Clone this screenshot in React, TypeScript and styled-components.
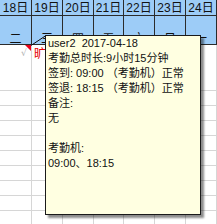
import React from "react";
import styled, { createGlobalStyle } from "styled-components";

const Global = createGlobalStyle`
  html, body { margin: 0; padding: 0; background: #fff; overflow: hidden; }
  body { font-family: "Liberation Sans", "Noto Sans CJK SC", sans-serif; }
`;

const Sheet = styled.div`
  position: relative;
  width: 217px;
  height: 224px;
  overflow: hidden;
  background: #fff;
`;

const Row = styled.div<{ $h: number; $header?: boolean }>`
  display: grid;
  grid-template-columns: 32px 31px 31px 30px 31px 31px 31px;
  height: ${(p) => p.$h}px;
  box-sizing: border-box;
  background: ${(p) => (p.$header ? "#9dccf7" : "#fff")};
  border-bottom: 1px solid ${(p) => (p.$header ? "#2b2b2b" : "#d6d6d6")};
`;

const Cell = styled.div<{ $header?: boolean; $valign?: "center" | "end" }>`
  position: relative;
  box-sizing: border-box;
  border-right: 1px solid ${(p) => (p.$header ? "#2b2b2b" : "#d6d6d6")};
  display: flex;
  justify-content: center;
  align-items: ${(p) => (p.$valign === "end" ? "flex-end" : "center")};
  font-size: 12px;
  line-height: ${(p) => (p.$valign === "end" ? "10px" : "14px")};
  color: #111;
`;

const Check = styled.span`
  position: absolute;
  left: 21px;
  top: 1px;
  font-size: 9px;
  color: #b0b0b0;
  font-family: "DejaVu Sans", sans-serif;
`;

const RedMark = styled.span`
  position: absolute;
  right: 0;
  top: 0;
  width: 0;
  height: 0;
  border-top: 6px solid #e8001c;
  border-left: 6px solid transparent;
`;

const Absent = styled.span`
  position: absolute;
  left: 2px;
  top: 1px;
  font-size: 12px;
  color: #e60000;
  font-family: "Noto Sans CJK SC", sans-serif;
`;

const Comment = styled.div`
  position: absolute;
  left: 45px;
  top: 35px;
  width: 156px;
  height: 180px;
  box-sizing: border-box;
  background: #ffffe1;
  border: 1px solid #1a1a1a;
  box-shadow: 3px 3px 2px rgba(0, 0, 0, 0.45);
  padding: 0 2px;
  display: flex;
  flex-direction: column;
`;

const Line = styled.div`
  height: 15px;
  line-height: 15px;
  font-size: 11px;
  color: #111;
  white-space: pre;
  font-family: "Liberation Sans", "Noto Sans CJK SC", sans-serif;
`;

const Connector = styled.svg`
  position: absolute;
  left: 0;
  top: 0;
  pointer-events: none;
`;

const days = ["18日", "19日", "20日", "21日", "22日", "23日", "24日"];
const weekdays = ["二", "三", "四", "五", "六", "日", "一"];

const lines = [
  "user2  2017-04-18",
  "考勤总时长:9小时15分钟",
  "签到: 09:00 （考勤机）正常",
  "签退: 18:15 （考勤机）正常",
  "备注:",
  "无",
  "",
  "考勤机:",
  "09:00、18:15",
];

export default function App() {
  const emptyRows = Array.from({ length: 9 });
  return (
    <Sheet>
      <Global />
      <Row $h={16} $header>
        {days.map((d) => (
          <Cell key={d} $header>{d}</Cell>
        ))}
      </Row>
      <Row $h={29} $header>
        {weekdays.map((w, i) => (
          <Cell key={i} $header $valign="end">{w}</Cell>
        ))}
      </Row>
      <Row $h={46}>
        <Cell>
          <Check>√</Check>
          <RedMark />
        </Cell>
        <Cell>
          <Absent>旷</Absent>
        </Cell>
        <Cell />
        <Cell />
        <Cell />
        <Cell />
        <Cell />
      </Row>
      {emptyRows.map((_, r) => (
        <Row key={r} $h={15}>
          {days.map((d) => (
            <Cell key={d} />
          ))}
        </Row>
      ))}
      <Connector width="60" height="60">
        <line x1="31" y1="45.5" x2="46" y2="35.5" stroke="#111" strokeWidth="1" />
      </Connector>
      <Comment>
        {lines.map((l, i) => (
          <Line key={i}>{l}</Line>
        ))}
      </Comment>
    </Sheet>
  );
}
